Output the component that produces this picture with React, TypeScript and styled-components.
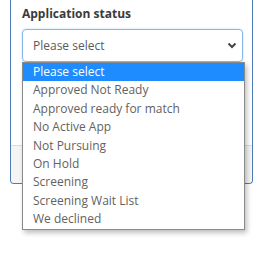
import React from 'react'
import styled, { createGlobalStyle } from 'styled-components'

const GlobalStyle = createGlobalStyle`
  html, body {
    margin: 0;
    padding: 0;
    background: #fff;
    font-family: 'Open Sans', 'Noto Sans', sans-serif;
  }
  #root {
    min-height: 257px;
  }
`

const options = [
  'Please select',
  'Approved Not Ready',
  'Approved ready for match',
  'No Active App',
  'Not Pursuing',
  'On Hold',
  'Screening',
  'Screening Wait List',
  'We declined',
]

const Panel = styled.div`
  margin-left: 10px;
  width: 243px;
  box-sizing: border-box;
  border: 1px solid #4f7cb8;
  border-top: none;
  border-radius: 0 0 4px 4px;
`

const Body = styled.div`
  position: relative;
  padding: 5px 10px 0 11px;
  height: 145px;
  box-sizing: border-box;
`

const Label = styled.div`
  font-size: 12px;
  font-weight: 700;
  color: #3a3a3a;
  line-height: 17px;
  margin-bottom: 7px;
`

const SelectBox = styled.div`
  display: flex;
  align-items: center;
  justify-content: space-between;
  width: 221px;
  height: 33px;
  box-sizing: border-box;
  padding: 0 5px 0 10px;
  border: 1px solid #86b7e8;
  border-radius: 4px;
  box-shadow: 0 0 2px rgba(102, 175, 233, 0.5);
  font-size: 12px;
  color: #5a5a5a;
`

const Footer = styled.div`
  height: 37px;
  background: #f5f5f5;
  border-top: 1px solid #dcdcdc;
  border-radius: 0 0 4px 4px;
`

const List = styled.ul`
  position: absolute;
  left: 11px;
  top: 62px;
  width: 221px;
  margin: 0;
  padding: 0;
  list-style: none;
  background: #fff;
  border: 1px solid #8a8a8a;
  box-shadow: 2px 3px 5px rgba(0, 0, 0, 0.25);
  z-index: 2;
`

const Item = styled.li<{ $active?: boolean }>`
  height: 18.4px;
  line-height: 18.4px;
  padding-left: 10px;
  font-size: 12px;
  white-space: nowrap;
  color: ${(p) => (p.$active ? '#fff' : '#626262')};
  background: ${(p) => (p.$active ? '#1e8cff' : 'transparent')};
`

const Chevron = () => (
  <svg width="10" height="7" viewBox="0 0 10 7">
    <path d="M1.5 1.5 L5 5 L8.5 1.5" fill="none" stroke="#444" strokeWidth="2" />
  </svg>
)

export default function App() {
  return (
    <>
      <GlobalStyle />
      <Panel>
        <Body>
          <Label>Application status</Label>
          <SelectBox>
            <span>Please select</span>
            <Chevron />
          </SelectBox>
          <List>
            {options.map((o, i) => (
              <Item key={o} $active={i === 0}>
                {o}
              </Item>
            ))}
          </List>
        </Body>
        <Footer />
      </Panel>
    </>
  )
}
